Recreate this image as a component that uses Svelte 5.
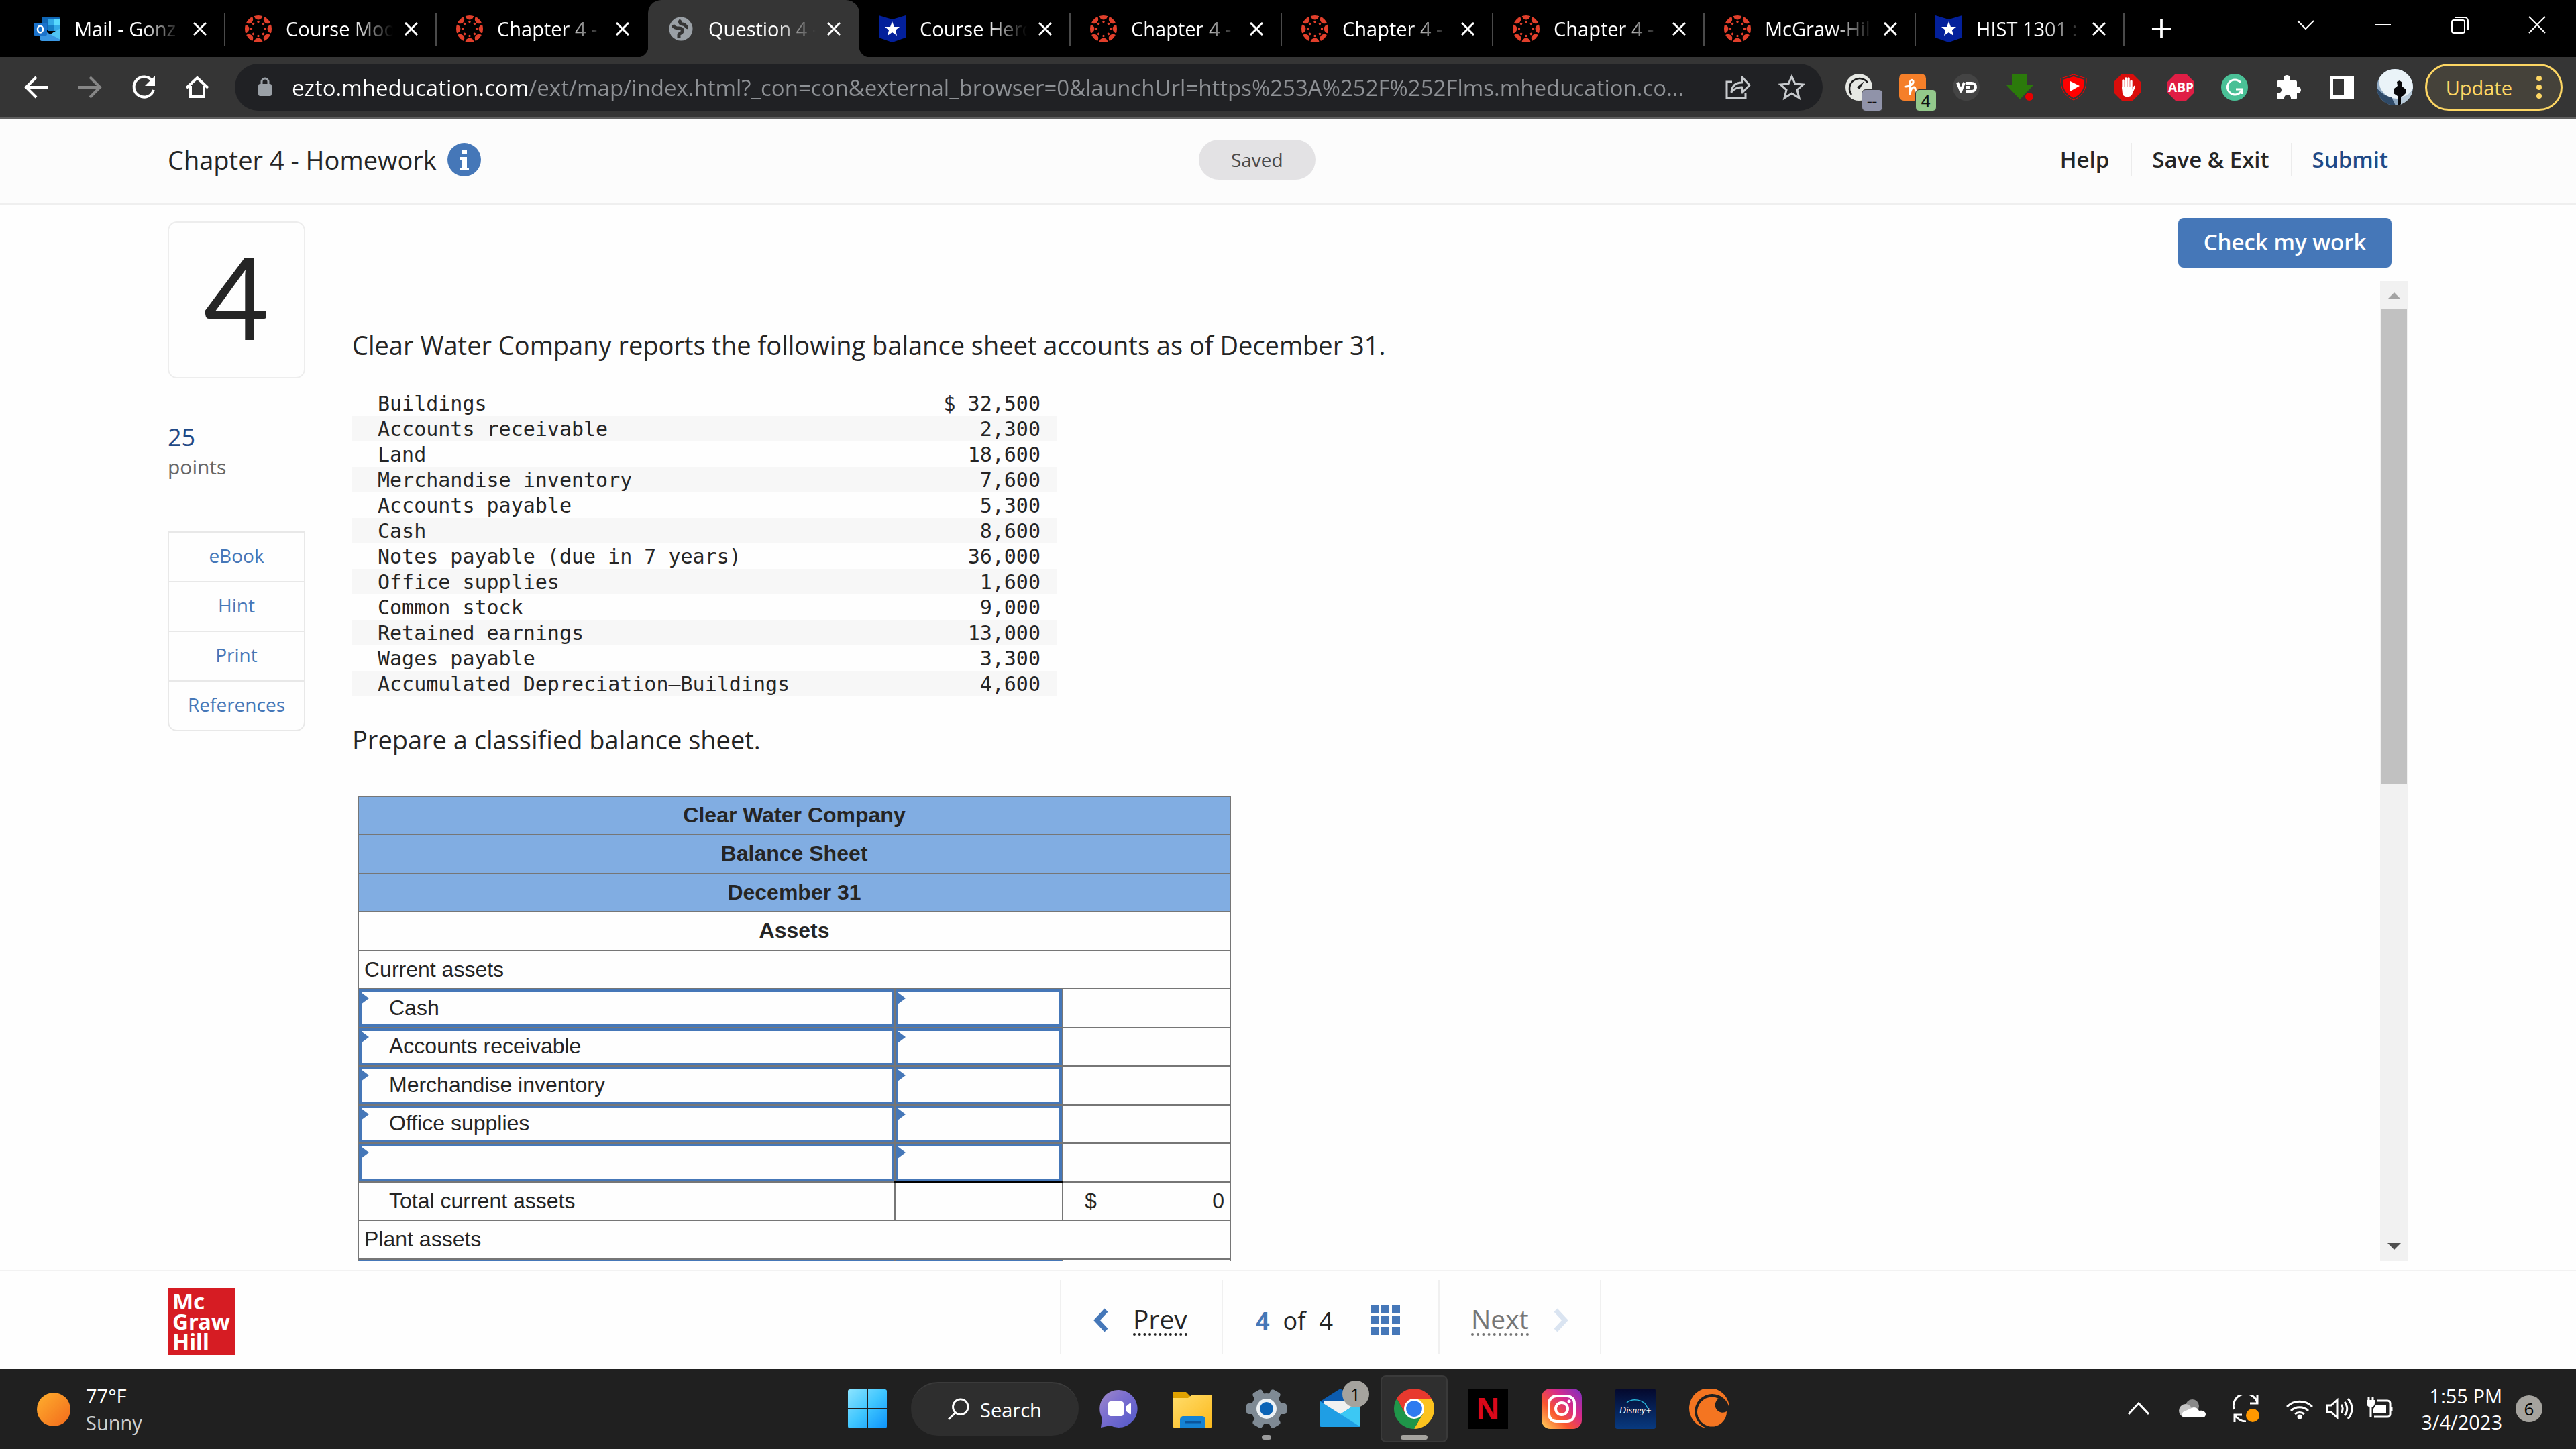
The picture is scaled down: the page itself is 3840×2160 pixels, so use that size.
<script lang="ts">
  const tabs = [
    { icon: "outlook", title: "Mail - Gonz" },
    { icon: "canvas", title: "Course Mod" },
    { icon: "canvas", title: "Chapter 4 -" },
    { icon: "globe", title: "Question 4 -", active: true },
    { icon: "hero", title: "Course Hero" },
    { icon: "canvas", title: "Chapter 4 -" },
    { icon: "canvas", title: "Chapter 4 -" },
    { icon: "canvas", title: "Chapter 4 -" },
    { icon: "canvas", title: "McGraw-Hil" },
    { icon: "hero", title: "HIST 1301 :" }
  ];

  const accounts = [
    ["Buildings", "$ 32,500"],
    ["Accounts receivable", "2,300"],
    ["Land", "18,600"],
    ["Merchandise inventory", "7,600"],
    ["Accounts payable", "5,300"],
    ["Cash", "8,600"],
    ["Notes payable (due in 7 years)", "36,000"],
    ["Office supplies", "1,600"],
    ["Common stock", "9,000"],
    ["Retained earnings", "13,000"],
    ["Wages payable", "3,300"],
    ["Accumulated Depreciation—Buildings", "4,600"]
  ];

  const headings = ["Clear Water Company", "Balance Sheet", "December 31"];
  const resources = ["eBook", "Hint", "Print", "References"];
  const spokes = [0, 45, 90, 135, 180, 225, 270, 315];

  let address = $state(
    "ezto.mheducation.com/ext/map/index.html?_con=con&external_browser=0&launchUrl=https%253A%252F%252Flms.mheducation.co..."
  );
  let currentAssets = $state([
    { name: "Cash", amount: "" },
    { name: "Accounts receivable", amount: "" },
    { name: "Merchandise inventory", amount: "" },
    { name: "Office supplies", amount: "" },
    { name: "", amount: "" }
  ]);

  const total = $derived(currentAssets.reduce((sum, row) => sum + (Number(row.amount) || 0), 0));
</script>

{#snippet favicon(name: string)}
  <svg class="favicon" viewBox="0 0 40 40" aria-hidden="true">
    {#if name === "outlook"}
      <rect x="12" y="2" width="27" height="20" rx="2" fill="#1066b5" />
      <path d="M21 5h9v9h-9z" fill="#32a9e7" />
      <path d="M30 5h9v9h-9z" fill="#58d9fd" />
      <path d="M21 14h9v9h-9z" fill="#167ec6" />
      <path d="M30 14h9v9h-9z" fill="#32a9e7" />
      <path d="M10 19l15 9 15-9v17a2 2 0 0 1-2 2H12a2 2 0 0 1-2-2z" fill="#3a97e3" />
      <path d="M40 19v17l-15-8z" fill="#50c5f4" />
      <rect x="0" y="11" width="20" height="19" rx="2" fill="#1a72cb" />
      <ellipse cx="10" cy="20.500" rx="4" ry="5" fill="none" stroke="#fff" stroke-width="2.500" />
    {:else if name === "canvas"}
      <g clip-path="url(#ring)" fill="#e13f2b">
        {#each spokes as angle}
          <circle cx="20" cy="0" r="6.400" transform="rotate({angle} 20 20)" />
          <circle cx="20" cy="9.500" r="1.700" transform="rotate({angle} 20 20)" />
        {/each}
      </g>
    {:else if name === "globe"}
      <circle cx="20" cy="20" r="17.500" fill="#9aa0a6" />
      <path
        d="M8 14c1 4 5 5 9 5 4 0 6 2 5 5s-5 2-5 5v5M20 7c-3 3-1 6 3 6 4 0 4 5 8 5"
        fill="none"
        stroke="#353535"
        stroke-width="5"
      />
    {:else}
      <path d="M0 0l20 6L40 0v33l-20 7-20-7z" fill="#03209b" />
      <path d="M20 9l3 8h8l-6 5 2 8-7-5-7 5 2-8-6-5h8z" fill="#fff" />
    {/if}
  </svg>
{/snippet}

{#snippet cross()}
  <svg class="cross" viewBox="0 0 20 20" aria-hidden="true">
    <path d="M1 1l18 18M19 1L1 19" stroke="#fff" stroke-width="3" />
  </svg>
{/snippet}

<svg class="defs" aria-hidden="true">
  <defs>
    <clipPath id="ring"><circle cx="20" cy="20" r="20" /></clipPath>
    <clipPath id="avatar"><circle cx="27" cy="27" r="27" /></clipPath>
    <linearGradient id="win" x1="0" y1="0" x2="1" y2="1">
      <stop offset="0" stop-color="#8ce4ff" />
      <stop offset=".5" stop-color="#3fc6ff" />
      <stop offset="1" stop-color="#0d93fb" />
    </linearGradient>
    <linearGradient id="chat" x1="0" y1="0" x2="1" y2="1">
      <stop offset="0" stop-color="#a08ac8" />
      <stop offset=".4" stop-color="#7c6fd0" />
      <stop offset="1" stop-color="#5158c8" />
    </linearGradient>
    <linearGradient id="insta" x1="0" y1="1" x2="1" y2="0">
      <stop offset="0" stop-color="#ffd65c" />
      <stop offset=".35" stop-color="#f9562e" />
      <stop offset=".65" stop-color="#d62a8c" />
      <stop offset="1" stop-color="#7a2fc4" />
    </linearGradient>
    <linearGradient id="disney" x1="0" y1="0" x2="0" y2="1">
      <stop offset="0" stop-color="#04082c" />
      <stop offset="1" stop-color="#083a80" />
    </linearGradient>
    <linearGradient id="folder" x1="0" y1="0" x2="1" y2="1">
      <stop offset="0" stop-color="#ffdd6b" />
      <stop offset="1" stop-color="#fcb91c" />
    </linearGradient>
    <linearGradient id="sun" x1="0" y1="0" x2="1" y2="1">
      <stop offset="0" stop-color="#ffb02e" />
      <stop offset="1" stop-color="#f2691b" />
    </linearGradient>
  </defs>
</svg>

<div class="screen">
  <header class="browser">
    <div class="tab-strip">
      <div class="tabs" role="tablist">
        {#each tabs as tab, i}
          <div class="tab" class:active={tab.active} class:plain={i === 2} role="tab" aria-selected={tab.active ?? false}>
            {@render favicon(tab.icon)}
            <span class="tab-title">{tab.title}</span>
            <button aria-label="Close tab">{@render cross()}</button>
          </div>
        {/each}
      </div>
      <button class="new-tab" aria-label="New tab">
        <svg viewBox="0 0 32 32"><path d="M16 1v30M1 16h30" stroke="#fff" stroke-width="4" /></svg>
      </button>
      <div class="window-controls">
        <button aria-label="Search tabs">
          <svg viewBox="0 0 26 26"><path d="M1 7l12 12L25 7" /></svg>
        </button>
        <button aria-label="Minimize"><svg viewBox="0 0 26 26"><path d="M1 13h24" /></svg></button>
        <button aria-label="Restore">
          <svg viewBox="0 0 26 26">
            <rect x="1" y="6" width="19" height="19" rx="3" />
            <path d="M6 2h14a5 5 0 0 1 5 5v13" />
          </svg>
        </button>
        <button aria-label="Close"><svg viewBox="0 0 26 26"><path d="M1 1l24 24M25 1L1 25" /></svg></button>
      </div>
    </div>

    <div class="toolbar">
      <div class="history">
        <button aria-label="Back">
          <svg viewBox="0 0 40 40"><path d="M38 20H6M20 5L5 20l15 15" stroke="#fff" /></svg>
        </button>
        <button aria-label="Forward">
          <svg viewBox="0 0 40 40"><path d="M2 20h32M20 5l15 15-15 15" stroke="#868686" /></svg>
        </button>
        <button aria-label="Reload">
          <svg viewBox="0 0 40 40">
            <path d="M33 11A15 15 0 1 0 35 24" stroke="#fff" />
            <path d="M37 3v15H22z" fill="#fff" />
          </svg>
        </button>
        <button aria-label="Home">
          <svg viewBox="0 0 40 40"><path d="M10 18v16h20V18M4 21L20 6l16 15" stroke="#fff" stroke-linejoin="miter" /></svg>
        </button>
      </div>
      <div class="omnibox">
        <svg class="lock" viewBox="0 0 22 30" aria-hidden="true">
          <rect x="1" y="10" width="20" height="18" rx="3" fill="#9aa0a6" />
          <path d="M6 11V7a5 5 0 0 1 10 0v4" fill="none" stroke="#9aa0a6" stroke-width="3" />
        </svg>
        <input aria-label="Address" bind:value={address} />
        <button aria-label="Share">
          <svg viewBox="0 0 40 40">
            <path d="M11 12H3v24h28v-8" />
            <path d="M10 27c1-10 7-14 16-14V5l11 12-11 11v-8c-7 0-12 2-16 7z" stroke-linejoin="round" />
          </svg>
        </button>
        <button aria-label="Bookmark this page">
          <svg viewBox="0 0 40 40">
            <path d="M20 4l5 11 12 1-9 8 3 12-11-7-11 7 3-12-9-8 12-1z" />
          </svg>
        </button>
      </div>
      <div class="extensions">
        <button aria-label="Performance">
          <svg viewBox="0 0 40 40">
            <circle cx="20" cy="20" r="20" fill="#e6e8e3" />
            <path d="M9 31A15 15 0 1 1 33 13" fill="none" stroke="#1c1c1c" stroke-width="2.500" />
            <path d="M17 20l11-9-7 12z" fill="#1c1c1c" />
          </svg>
          <span class="badge idle">--</span>
        </button>
        <button aria-label="Honey">
          <svg viewBox="0 0 40 40">
            <rect width="40" height="40" rx="7" fill="#f57f29" />
            <path
              d="M10 19c6 0 12-4 11-8-1-3-5-2-5 3v17c1-7 3-11 6-11 4 0 1 7 4 9"
              fill="none"
              stroke="#fff"
              stroke-width="3"
              stroke-linecap="round"
            />
          </svg>
          <span class="badge offers">4</span>
        </button>
        <button aria-label="Video downloader">
          <svg viewBox="0 0 40 40">
            <circle cx="20" cy="20" r="20" fill="#444" />
            <path
              d="M7 13l5 13 5-13M20 14h8a6 6 0 0 1 0 12h-8M20 20h6"
              fill="none"
              stroke="#fff"
              stroke-width="4"
              stroke-linejoin="round"
            />
          </svg>
        </button>
        <button aria-label="Downloads">
          <svg viewBox="0 0 40 40">
            <path d="M9 0h22v17h9L20 38 0 17h9z" fill="#2b7a0b" />
            <circle cx="34" cy="34" r="6" fill="#e80000" />
          </svg>
        </button>
        <button aria-label="Video ad blocker">
          <svg viewBox="0 0 40 40">
            <path d="M20 1l19 6c1 14-5 26-19 32C6 33 0 21 1 7z" fill="none" stroke="#f00" stroke-width="1" />
            <path d="M20 4l16 5c1 12-4 21-16 27C8 30 3 21 4 9z" fill="#f00" />
            <path d="M15 11v15l14-8z" fill="#fff" />
          </svg>
        </button>
        <button aria-label="Ad blocker">
          <svg viewBox="0 0 40 40">
            <path d="M12 0h16l12 12v16L28 40H12L0 28V12z" fill="#d90d0b" />
            <path
              d="M14 22V10M18 22V7M22 22V7M26 24v-13"
              stroke="#fff"
              stroke-width="3.400"
              stroke-linecap="round"
            />
            <path d="M12 20h15v4l3-6c3-1 2 2 1 4l-4 9c-2 4-12 5-14-1z" fill="#fff" />
          </svg>
        </button>
        <button aria-label="Adblock Plus">
          <svg viewBox="0 0 40 40">
            <path d="M12 0h16l12 12v16L28 40H12L0 28V12z" fill="#e01e45" />
            <text x="20" y="27" text-anchor="middle" font-size="19" font-weight="700" fill="#fff">ABP</text>
          </svg>
        </button>
        <button aria-label="Writing assistant">
          <svg viewBox="0 0 40 40">
            <circle cx="20" cy="20" r="20" fill="#4ac096" />
            <path d="M29 13a11 11 0 1 0 2 10h-9M31 22v8" fill="none" stroke="#fff" stroke-width="3" />
          </svg>
        </button>
        <button aria-label="Extensions">
          <svg viewBox="0 0 40 40">
            <path
              d="M3 12a2 2 0 0 1 2-2h8V7a5 5 0 0 1 10 0v3h8a2 2 0 0 1 2 2v7h1a5 5 0 0 1 0 10h-1v7a2 2 0 0 1-2 2h-7v-2a5 5 0 0 0-10 0v2H5a2 2 0 0 1-2-2v-7h2a5 5 0 0 0 0-10H3z"
              fill="#fff"
            />
          </svg>
        </button>
        <button aria-label="Side panel">
          <svg viewBox="0 0 40 40">
            <path d="M2 3h36v34H2zM7 8v24h16V8z" fill="#fff" fill-rule="evenodd" />
          </svg>
        </button>
      </div>
      <button class="profile" aria-label="Profile">
        <svg viewBox="0 0 54 54">
          <g clip-path="url(#avatar)">
            <path d="M0 0h54v54H0z" fill="#8fa9c2" />
            <circle cx="30" cy="17" r="27" fill="#eaf3f8" />
            <path d="M0 28c6 8 14 12 22 14l6 12H0z" fill="#2f4a68" />
            <path d="M34 42c8-1 14-5 20-10v22H34z" fill="#b9cbd9" />
            <path d="M31 54V40l-6-4 1-7 5-4-1-6 4-2 4 3-1 5 6 5v6l-4 4-3 1v13z" fill="#08080a" />
          </g>
        </svg>
      </button>
      <button class="update">
        Update
        <svg viewBox="0 0 8 34" aria-hidden="true">
          <g fill="#fdd663"><circle cx="4" cy="4" r="4" /><circle cx="4" cy="17" r="4" /><circle cx="4" cy="30" r="4" /></g>
        </svg>
      </button>
    </div>
  </header>

  <div class="assignment-bar">
    <h1>Chapter 4 - Homework</h1>
    <button class="info" aria-label="Assignment information">
      <svg viewBox="0 0 50 50">
        <circle cx="25" cy="25" r="25" fill="#4577b8" />
        <path d="M22 10h7v6h-7zM19 21h10v16h3v4H18v-4h4V25h-3z" fill="#fff" />
      </svg>
    </button>
    <span class="saved">Saved</span>
    <nav>
      <a href="#help">Help</a>
      <a href="#exit">Save &amp; Exit</a>
      <a class="submit" href="#submit">Submit</a>
    </nav>
  </div>

  <main>
    <aside>
      <div class="question-number">4</div>
      <div class="points"><strong>25</strong>points</div>
      <ul>
        {#each resources as resource}
          <li><a href="#{resource}">{resource}</a></li>
        {/each}
      </ul>
    </aside>

    <section>
      <button class="check">Check my work</button>
      <div class="scroller">
        <div class="question">
          <p>Clear Water Company reports the following balance sheet accounts as of December 31.</p>
          <table class="accounts">
            <tbody>
              {#each accounts as [name, amount]}
                <tr><td>{name}</td><td>{amount}</td></tr>
              {/each}
            </tbody>
          </table>
          <p>Prepare a classified balance sheet.</p>
          <table class="sheet">
            <colgroup><col /><col class="amount-col" /><col class="amount-col" /></colgroup>
            <tbody>
              {#each headings as heading}
                <tr><th class="banner" colspan="3">{heading}</th></tr>
              {/each}
              <tr><th colspan="3">Assets</th></tr>
              <tr><td colspan="3">Current assets</td></tr>
              {#each currentAssets as row, i}
                <tr>
                  <td class="entry"><input aria-label="Account {i + 1}" bind:value={row.name} /></td>
                  <td class="entry" class:summed={i === currentAssets.length - 1}>
                    <input aria-label="Amount {i + 1}" bind:value={row.amount} />
                  </td>
                  <td></td>
                </tr>
              {/each}
              <tr>
                <td class="indent">Total current assets</td>
                <td></td>
                <td><div class="money"><span>$</span><span>{total}</span></div></td>
              </tr>
              <tr><td colspan="3">Plant assets</td></tr>
              <tr>
                <td class="entry"><input aria-label="Plant asset" /></td>
                <td class="entry"><input aria-label="Plant asset amount" /></td>
                <td></td>
              </tr>
            </tbody>
          </table>
        </div>
        <div class="scrollbar" aria-hidden="true">
          <svg viewBox="0 0 42 42"><path d="M21 17l10 10H11z" fill="#a3a3a3" /></svg>
          <div class="thumb"></div>
          <svg viewBox="0 0 42 42"><path d="M21 25L11 15h20z" fill="#505050" /></svg>
        </div>
      </div>
    </section>
  </main>

  <footer>
    <div class="logo"><span>Mc</span><span>Graw</span><span>Hill</span></div>
    <nav class="pager">
      <a href="#prev">
        <svg viewBox="0 0 24 36"><path d="M20 3L6 18l14 15" stroke="#4577b8" /></svg>
        <span>Prev</span>
      </a>
      <div class="position">
        <b>4</b> <span>of</span> <span>4</span>
        <svg viewBox="0 0 44 44" aria-hidden="true">
          {#each [0, 16, 32] as y}
            {#each [0, 16, 32] as x}
              <rect {x} {y} width="12" height="12" fill="#4577b8" />
            {/each}
          {/each}
        </svg>
      </div>
      <a class="next" href="#next">
        <span>Next</span>
        <svg viewBox="0 0 24 36"><path d="M4 3l14 15L4 33" stroke="#dae4f1" /></svg>
      </a>
    </nav>
  </footer>

  <div class="taskbar">
    <button class="weather">
      <svg viewBox="0 0 52 52" aria-hidden="true"><circle cx="26" cy="26" r="25" fill="url(#sun)" /></svg>
      <span>77°F<small>Sunny</small></span>
    </button>

    <div class="apps">
      <button aria-label="Start">
        <svg viewBox="0 0 60 60">
          <path
            d="M4 1h25v28H1V4a3 3 0 0 1 3-3zM31 1h25a3 3 0 0 1 3 3v25H31zM1 31h28v28H4a3 3 0 0 1-3-3zM31 31h28v25a3 3 0 0 1-3 3H31z"
            fill="url(#win)"
          />
        </svg>
      </button>
      <button class="search">
        <svg viewBox="0 0 36 36" aria-hidden="true">
          <circle cx="21" cy="14" r="12" /><path d="M13 23L2 34" />
        </svg>
        Search
      </button>
      <div class="pinned">
        <button aria-label="Chat">
          <svg viewBox="0 0 60 60">
            <path d="M30 2a28 28 0 1 1-13 53L3 58l2-14A28 28 0 0 1 30 2z" fill="url(#chat)" />
            <rect x="14" y="19" width="23" height="22" rx="4" fill="#fff" />
            <path d="M40 27l6-5c1-1 2 0 2 1v14c0 1-1 2-2 1l-6-5z" fill="#fff" />
          </svg>
        </button>
        <button aria-label="File Explorer">
          <svg viewBox="0 0 60 60">
            <path d="M1 5h19l7 7-5 6H0z" fill="#e0a200" />
            <path d="M0 14h23l5-4h31v46a2 2 0 0 1-2 2H2a2 2 0 0 1-2-2z" fill="url(#folder)" />
            <path d="M11 58V46a5 5 0 0 1 5-5h28a5 5 0 0 1 5 5v12z" fill="#1583d4" />
            <path d="M19 50h24" stroke="#0a559c" stroke-width="3" />
          </svg>
        </button>
        <button class="running" aria-label="Settings">
          <svg viewBox="0 0 60 60">
            <g fill="#7f8a94">
              <circle cx="30" cy="30" r="23" />
              {#each [0, 60, 120] as angle}
                <rect x="0" y="22" width="60" height="16" rx="4" transform="rotate({angle} 30 30)" />
              {/each}
            </g>
            <circle cx="30" cy="30" r="15" fill="#eef2f5" />
            <circle cx="30" cy="30" r="10" fill="#0c64b6" />
          </svg>
        </button>
        <button aria-label="Mail">
          <svg viewBox="0 0 60 60">
            <path d="M0 19L30 0l30 19v38H0z" fill="#0c5cb0" />
            <path d="M5 18h50v20H5z" fill="#f1f1f1" />
            <path d="M0 19l30 19 30-19v36a2 2 0 0 1-2 2H2a2 2 0 0 1-2-2z" fill="#1f9ee4" />
            <path d="M60 19v38L30 38z" fill="#3cc8f4" />
          </svg>
          <span class="count">1</span>
        </button>
        <button class="running focused" aria-label="Chrome">
          <svg viewBox="0 0 48 48">
            <path d="M3.200 12A24 24 0 0 1 44.800 12L24 12 13.600 30z" fill="#e8392e" />
            <path d="M44.800 12A24 24 0 0 1 24 48L34.400 30 24 12z" fill="#fcc31e" />
            <path d="M24 48A24 24 0 0 1 3.200 12L13.600 30 34.400 30z" fill="#1f9649" />
            <circle cx="24" cy="24" r="12" fill="#fff" />
            <circle cx="24" cy="24" r="9.500" fill="#2f7bf0" />
          </svg>
        </button>
        <button aria-label="Netflix">
          <svg viewBox="0 0 60 60">
            <rect width="60" height="60" fill="#000" />
            <text x="30" y="46" text-anchor="middle" font-size="44" font-weight="700" fill="#d9081a" class="mark">N</text>
          </svg>
        </button>
        <button aria-label="Instagram">
          <svg viewBox="0 0 60 60">
            <rect width="60" height="60" rx="13" fill="url(#insta)" />
            <g fill="none" stroke="#fff" stroke-width="4">
              <rect x="11" y="11" width="38" height="38" rx="11" />
              <circle cx="30" cy="30" r="9" />
            </g>
            <circle cx="41" cy="19" r="2.500" fill="#fff" />
          </svg>
        </button>
        <button aria-label="Disney+">
          <svg viewBox="0 0 60 60">
            <rect width="60" height="60" rx="3" fill="url(#disney)" />
            <path d="M17 21c8-7 26-6 31 8" fill="none" stroke="#28b4d8" stroke-width="1.500" />
            <text class="script" x="30" y="37" text-anchor="middle" font-size="14" fill="#fff">Disney+</text>
          </svg>
        </button>
        <button aria-label="Crunchyroll">
          <svg viewBox="0 0 60 60">
            <path d="M27 59A30 30 0 1 1 60 30a26 26 0 1 0-33 29z" fill="#f47521" />
            <path d="M44 15a11 11 0 1 0 12 19A22 22 0 1 1 44 15z" fill="#f47521" />
          </svg>
        </button>
      </div>
    </div>

    <div class="tray">
      <button aria-label="Hidden icons">
        <svg viewBox="0 0 40 40"><path d="M5 28l15-16 15 16" /></svg>
      </button>
      <button aria-label="OneDrive">
        <svg viewBox="0 0 40 40">
          <g class="cloud">
            <circle cx="20" cy="16" r="10" fill="#8a8a8a" />
            <circle cx="10" cy="23" r="10" fill="#c4c4c4" />
            <path d="M6 33a8 8 0 0 1 0-8l13-6c5-3 10 1 11 4 6-1 10 2 10 5 0 3-2 5-5 5z" fill="#fff" />
          </g>
        </svg>
      </button>
      <button aria-label="Updates">
        <svg viewBox="0 0 40 40">
          <path d="M2 21A17 17 0 0 1 37 11M37 0v12H26M3 40V29h11M3 29c4 6 9 10 17 10" />
          <circle cx="30" cy="30" r="10" fill="#ff9800" stroke="none" />
        </svg>
      </button>
      <button class="system" aria-label="Network, sound, battery">
        <svg viewBox="0 0 40 40">
          <path d="M1 17a27 27 0 0 1 38 0M7 23a19 19 0 0 1 26 0M13 28a11 11 0 0 1 14 0" />
          <circle cx="20" cy="32" r="2" fill="#fff" />
        </svg>
        <svg viewBox="0 0 40 40">
          <path d="M1 15h6l9-8v26l-9-8H1zM22 14c3 4 3 8 0 12M27 10c5 6 5 14 0 20M32 5c8 9 8 21 0 30" />
        </svg>
        <svg viewBox="0 0 40 40">
          <path d="M15 8h16a4 4 0 0 1 4 4v16a4 4 0 0 1-4 4H11M37 17v6M6 16v17M3 2v5M9 2v5" />
          <path d="M0 7h12v5a5 5 0 0 1-12 0zM14 14h15v13H10v-7z" fill="#fff" stroke="none" />
        </svg>
      </button>
      <button class="clock"><span>1:55 PM</span><span>3/4/2023</span></button>
      <button class="notifications" aria-label="6 notifications">6</button>
    </div>
  </div>
</div>

<style>
  :global(body) {
    margin: 0;
  }

  * {
    box-sizing: border-box;
  }

  button {
    display: flex;
    align-items: center;
    justify-content: center;
    padding: 0;
    border: 0;
    background: none;
    color: inherit;
    font: inherit;
  }

  a {
    color: inherit;
    text-decoration: none;
  }

  .defs {
    position: absolute;
    width: 0;
    height: 0;
  }

  .screen {
    display: flex;
    flex-direction: column;
    height: 100vh;
    overflow: hidden;
    background: #fefefe;
    color: #252525;
    font-family: "Open Sans", sans-serif;
    font-size: 36px;
  }

  .browser,
  .taskbar {
    flex: none;
    color: #fff;
    font-size: 29px;
  }

  /* Tabs */

  .tab-strip {
    display: flex;
    height: 85px;
    padding-left: 21px;
    background: #000;
  }

  .tabs {
    display: flex;
    flex: none;
  }

  .tab {
    position: relative;
    display: flex;
    align-items: center;
    width: 315px;
    padding: 0 28px 0 29px;
  }

  .tab:last-child {
    width: 311px;
  }

  .tab::after {
    content: "";
    position: absolute;
    top: 19px;
    right: 0;
    width: 2px;
    height: 50px;
    background: #4a4a4a;
  }

  .tab.plain::after {
    display: none;
  }

  .tab.active {
    border-radius: 20px 20px 0 0;
    background: #353535;
  }

  /* curved feet where the active tab meets the toolbar */
  .tab.active::after {
    top: auto;
    right: -16px;
    bottom: 0;
    left: -16px;
    width: auto;
    height: 16px;
    background:
      radial-gradient(circle at 0 0, transparent 16px, #353535 17px) left / 16px 16px no-repeat,
      radial-gradient(circle at 100% 0, transparent 16px, #353535 17px) right / 16px 16px no-repeat;
  }

  .favicon {
    flex: none;
    width: 40px;
    height: 40px;
  }

  .tab-title {
    flex: 1;
    margin: 0 14px 0 21px;
    overflow: hidden;
    white-space: nowrap;
    mask-image: linear-gradient(to right, #000 100px, transparent 160px);
  }

  .cross {
    width: 20px;
    height: 20px;
  }

  .new-tab {
    width: 110px;
  }

  .new-tab svg {
    width: 30px;
  }

  .window-controls {
    display: flex;
    gap: 89px;
    margin-left: auto;
    padding: 0 45px 12px 0;
  }

  .window-controls svg {
    width: 26px;
    fill: none;
    stroke: #fff;
    stroke-width: 2;
  }

  /* Toolbar */

  .toolbar {
    display: flex;
    align-items: center;
    height: 93px;
    padding: 0 20px 0 34px;
    border-bottom: 3px solid #5f5f5f;
    background: #353535;
  }

  .history {
    display: flex;
    gap: 40px;
    margin-right: 36px;
  }

  .history svg {
    width: 40px;
    fill: none;
    stroke-width: 4;
  }

  .omnibox {
    display: flex;
    flex: 1;
    align-items: center;
    gap: 40px;
    height: 70px;
    padding: 0 26px 0 34px;
    border-radius: 35px;
    background: #202124;
  }

  .lock {
    width: 22px;
    margin-right: -11px;
  }

  .omnibox input {
    flex: 1;
    min-width: 0;
    height: 60px;
    padding: 0;
    border: 0;
    outline: none;
    background: linear-gradient(to right, #fff 351px, #8e9195 351px);
    background-clip: text;
    color: transparent;
    font: inherit;
    font-size: 33px;
  }

  .omnibox button svg {
    width: 40px;
    fill: none;
    stroke: #c7cacd;
    stroke-width: 3;
  }

  .extensions {
    display: flex;
    gap: 40px;
    margin: 0 32px 0 34px;
  }

  .extensions button {
    position: relative;
  }

  .extensions button > svg {
    width: 40px;
  }

  .badge {
    position: absolute;
    top: 23px;
    left: 24px;
    width: 32px;
    height: 33px;
    border: 1px solid #353535;
    border-radius: 6px;
    color: #111;
    font-size: 24px;
    font-weight: 600;
    line-height: 32px;
    text-align: center;
  }

  .badge.idle {
    background: #9093a9;
  }

  .badge.offers {
    background: #93c88b;
  }

  .profile svg {
    width: 54px;
  }

  .update {
    gap: 36px;
    height: 70px;
    margin-left: 18px;
    padding: 0 28px;
    border: 3px solid #fdd663;
    border-radius: 35px;
    background: #45423a;
    color: #fdd663;
  }

  .update svg {
    width: 8px;
  }

  /* Assignment header */

  .assignment-bar {
    display: flex;
    flex: none;
    align-items: center;
    height: 127px;
    padding: 0 280px 6px 250px;
    border-bottom: 2px solid #efefef;
    background: #fcfcfc;
  }

  h1 {
    margin: 0;
    font-size: 38px;
    font-weight: 400;
  }

  .info {
    margin-left: 16px;
  }

  .info svg {
    width: 50px;
  }

  .saved {
    width: 174px;
    margin-left: 1070px;
    border-radius: 30px;
    background: #e3e2e4;
    color: #4a4a4a;
    font-size: 28px;
    line-height: 60px;
    text-align: center;
  }

  .assignment-bar nav {
    display: flex;
    align-items: center;
    margin-left: auto;
    font-size: 33px;
    font-weight: 600;
    line-height: 50px;
  }

  .assignment-bar nav a + a {
    margin-left: 32px;
    padding-left: 30px;
    border-left: 2px solid #ececec;
  }

  .submit {
    color: #1f4a87;
  }

  /* Question */

  main {
    display: grid;
    flex: 1;
    grid-template-columns: 205px 1fr;
    gap: 70px;
    min-height: 0;
    padding: 20px 250px 13px;
  }

  .question-number {
    height: 234px;
    margin-top: 5px;
    border: 2px solid #ededed;
    border-radius: 14px;
    font-family: Lato, sans-serif;
    font-size: 170px;
    line-height: 218px;
    text-align: center;
  }

  .points {
    margin-top: 66px;
    color: #666;
    font-size: 30px;
    line-height: 44px;
  }

  .points strong {
    display: block;
    color: #1f4a87;
    font-size: 36px;
    font-weight: 400;
  }

  aside ul {
    margin: 74px 0 0;
    padding: 0;
    border: 2px solid #e8e8e8;
    border-radius: 0 0 14px 14px;
    list-style: none;
  }

  aside li {
    padding-bottom: 4px;
    color: #4577b8;
    font-size: 28px;
    line-height: 68px;
    text-align: center;
  }

  aside li + li {
    border-top: 2px solid #e8e8e8;
  }

  aside a {
    display: block;
  }

  section {
    display: flex;
    flex-direction: column;
    min-width: 0;
    min-height: 0;
  }

  .check {
    flex: none;
    align-self: flex-end;
    width: 318px;
    height: 74px;
    margin: 0 25px 20px 0;
    padding-bottom: 4px;
    border-radius: 8px;
    background: #4577b8;
    color: #fff;
    font-size: 33px;
    font-weight: 600;
  }

  .scroller {
    display: flex;
    flex: 1;
    min-height: 0;
  }

  .question {
    flex: 1;
    padding-top: 73px;
    overflow: hidden;
  }

  p {
    margin: 0;
    font-size: 38px;
    line-height: 44px;
  }

  table {
    border-collapse: collapse;
  }

  .accounts {
    width: 1050px;
    margin: 46px 0 42px;
    font-family: "DejaVu Sans Mono", monospace;
    font-size: 30px;
    line-height: 36px;
  }

  .accounts td {
    padding: 2px 24px 0 38px;
  }

  .accounts td + td {
    text-align: right;
  }

  .accounts tr:nth-child(even) {
    background: #f7f7f7;
  }

  .sheet {
    width: 1302px;
    margin: 62px 0 0 8px;
    table-layout: fixed;
    font-family: "Liberation Sans", Arial, sans-serif;
    font-size: 32px;
    line-height: 40px;
  }

  .amount-col {
    width: 250px;
  }

  .sheet tr {
    height: 57px;
  }

  .sheet tr:nth-child(even) {
    height: 58px;
  }

  .sheet th,
  .sheet td {
    padding: 0 8px 2px;
    border: 2px solid #767676;
  }

  .sheet .banner {
    background: #81ade2;
  }

  .sheet .indent {
    padding-left: 45px;
  }

  .sheet .entry {
    position: relative;
    padding: 0 0 2px;
    box-shadow: inset 0 0 0 4px #4577b8;
  }

  .sheet .summed {
    border-bottom: 3px solid #000;
  }

  .entry::before {
    content: "";
    position: absolute;
    top: 4px;
    left: 3px;
    border: 9px solid transparent;
    border-left: 12px solid #4577b8;
    border-right: 0;
  }

  .entry input {
    display: block;
    width: 100%;
    height: 48px;
    padding: 0 45px;
    border: 0;
    outline: none;
    background: none;
    color: inherit;
    font: inherit;
  }

  .money {
    display: flex;
    justify-content: space-between;
    padding-left: 24px;
  }

  .scrollbar {
    display: flex;
    flex-direction: column;
    width: 42px;
    background: #f1f1f1;
  }

  .scrollbar svg {
    width: 42px;
    height: 42px;
  }

  .thumb {
    height: 708px;
    margin: 0 2px auto;
    background: #c1c1c1;
  }

  /* Footer */

  footer {
    display: flex;
    flex: none;
    height: 147px;
    padding-left: 250px;
    border-top: 2px solid #f2f2f2;
  }

  .logo {
    display: flex;
    flex-direction: column;
    width: 100px;
    height: 100px;
    margin-top: 25px;
    padding: 5px 0 0 7px;
    background: #d61c23;
    color: #fff;
    font-family: "Noto Sans", sans-serif;
    font-size: 33px;
    font-weight: 700;
    line-height: 30px;
  }

  .pager {
    display: flex;
    height: 110px;
    margin: 13px 0 0 1230px;
    border-right: 2px solid #f0f0f0;
  }

  .pager a,
  .position {
    display: flex;
    align-items: center;
    padding-top: 10px;
    border-left: 2px solid #f0f0f0;
  }

  .pager a {
    gap: 36px;
    width: 241px;
    padding-left: 47px;
    font-size: 39px;
  }

  .pager a span {
    border-bottom: 4px dotted currentColor;
    line-height: 42px;
  }

  .pager a svg {
    width: 24px;
    fill: none;
    stroke-width: 7;
  }

  .pager .next {
    color: #767676;
  }

  .position {
    gap: 20px;
    width: 323px;
    padding-left: 49px;
    font-size: 36px;
  }

  .position b {
    color: #4577b8;
  }

  .position svg {
    width: 44px;
    margin-left: 36px;
  }

  /* Taskbar */

  .taskbar {
    display: grid;
    grid-template-columns: 1fr auto 1fr;
    height: 120px;
    background: #202020;
  }

  .weather {
    justify-self: start;
    gap: 22px;
    padding: 2px 0 0 54px;
    line-height: 40px;
    text-align: left;
  }

  .weather svg {
    width: 52px;
  }

  .weather span,
  .weather small {
    display: block;
    font-size: 29px;
  }

  .weather small {
    color: #d0d0d0;
  }

  .apps,
  .pinned,
  .tray {
    display: flex;
    align-items: center;
  }

  .apps > button > svg,
  .pinned svg {
    width: 60px;
    height: 60px;
  }

  .apps .search {
    gap: 15px;
    width: 250px;
    height: 80px;
    margin: 0 10px 0 35px;
    border-top: 2px solid #3b3b3b;
    border-radius: 40px;
    background: #2e2e2e;
  }

  .apps .search svg {
    width: 34px;
    height: 34px;
    fill: none;
    stroke: #fff;
    stroke-width: 3;
  }

  .pinned {
    gap: 10px;
    margin-right: -20px;
  }

  .pinned button {
    position: relative;
    width: 100px;
    height: 100px;
    border-radius: 8px;
  }

  .running::after {
    content: "";
    position: absolute;
    bottom: 4px;
    width: 14px;
    height: 7px;
    border-radius: 4px;
    background: #9b9b9b;
  }

  .running.focused {
    border: 2px solid #3a3a3a;
    background: #2f2f2f;
  }

  .focused::after {
    bottom: 2px;
    width: 40px;
    background: #a5a39e;
  }

  .count {
    position: absolute;
    top: 8px;
    right: 7px;
    width: 40px;
    height: 40px;
    border-radius: 50%;
    background: #a5a39e;
    color: #000;
    font-size: 26px;
    line-height: 40px;
  }

  .mark {
    font-family: "Liberation Sans Narrow", "Open Sans", sans-serif;
  }

  .script {
    font-family: "Liberation Serif", serif;
    font-style: italic;
  }

  .tray {
    justify-self: end;
    gap: 40px;
    padding-right: 50px;
  }

  .tray svg {
    width: 40px;
    height: 40px;
    fill: none;
    stroke: #fff;
    stroke-width: 3;
  }

  .tray .cloud {
    stroke: none;
  }

  .system {
    gap: 20px;
  }

  .clock {
    flex-direction: column;
    align-items: flex-end;
    width: 122px;
    font-size: 29px;
    line-height: 39px;
    white-space: nowrap;
  }

  .tray .notifications {
    width: 40px;
    height: 40px;
    margin-left: -20px;
    border-radius: 50%;
    background: #a5a39e;
    color: #000;
    font-size: 26px;
  }
</style>
